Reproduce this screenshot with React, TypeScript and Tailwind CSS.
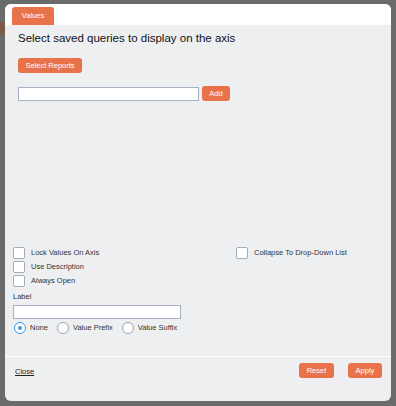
import { useState } from "react";

const orangeBtn =
  "flex items-center justify-center rounded-[3px] bg-[#e8734a] text-white text-[7.5px] leading-none";

const Checkbox = ({ label, checked, onChange }: { label: string; checked: boolean; onChange: () => void }) => {
  return (
    <label className="flex h-[14px] items-center gap-[6px] cursor-pointer">
      <span
        onClick={onChange}
        className="flex h-[12px] w-[12px] items-center justify-center rounded-[2px] border border-[#a4acb9] bg-white"
      >
        {checked && <span className="h-[6px] w-[6px] rounded-[1px] bg-[#3b97e3]" />}
      </span>
      <span className="text-[7.5px] text-[#333]">{label}</span>
    </label>
  );
};

const Radio = ({ label, checked, onChange }: { label: string; checked: boolean; onChange: () => void }) => {
  return (
    <label className="flex h-[12px] items-center gap-[4px] cursor-pointer" onClick={onChange}>
      <span
        className={
          "flex h-[12px] w-[12px] items-center justify-center rounded-full border bg-white " +
          (checked ? "border-[#3b97e3]" : "border-[#9aa3b0]")
        }
      >
        {checked && <span className="h-[4px] w-[4px] rounded-full bg-[#3b97e3]" />}
      </span>
      <span className="text-[7.5px] text-[#333]">{label}</span>
    </label>
  );
};

const App = () => {
  const [lock, setLock] = useState(false);
  const [useDesc, setUseDesc] = useState(false);
  const [alwaysOpen, setAlwaysOpen] = useState(false);
  const [collapse, setCollapse] = useState(false);
  const [affix, setAffix] = useState("none");
  const [query, setQuery] = useState("");
  const [label, setLabel] = useState("");

  return (
    <div className="relative h-[406px] w-[396px] overflow-hidden bg-[#6b6b6b] pl-[5px] pt-[4px] font-['Liberation_Sans',Arial,sans-serif]">
      {/* page content behind the overlay */}
      <div className="absolute left-0 top-[22px] h-[13px] w-[5px] bg-[#7e5a4b]"></div>

      <div className="relative flex h-[397px] w-[386px] flex-col overflow-hidden rounded-[6px] bg-[#eeeff1]">
        <div className="flex h-[21px] items-end bg-white pl-[7px]">
          <div className="flex h-[18px] w-[42px] items-center justify-center rounded-t-[3px] bg-[#e8734a] text-[7.5px] text-white">
            Values
          </div>
        </div>

        <div className="flex flex-1 flex-col">
          <div className="px-[13px] pt-[6px]">
            <h1 className="text-[11.5px] leading-[14px] text-[#111]">
              Select saved queries to display on the axis
            </h1>
            <button className={orangeBtn + " mt-[13px] h-[15px] w-[64px]"}>Select Reports</button>
            <div className="mt-[13px] flex items-center gap-[3px]">
              <input
                type="text"
                value={query}
                onChange={(e) => setQuery(e.target.value)}
                className="h-[14px] w-[181px] border border-[#a7b1c1] bg-white text-[8px] outline-none"
              />
              <button className={orangeBtn + " h-[15px] w-[28px]"}>Add</button>
            </div>
          </div>

          <div className="flex-1"></div>

          <div className="px-[8px] pb-[22px]">
            <div className="flex">
              <div className="flex w-[223px] flex-col">
                <Checkbox label="Lock Values On Axis" checked={lock} onChange={() => setLock(!lock)} />
                <Checkbox label="Use Description" checked={useDesc} onChange={() => setUseDesc(!useDesc)} />
                <Checkbox label="Always Open" checked={alwaysOpen} onChange={() => setAlwaysOpen(!alwaysOpen)} />
              </div>
              <div className="flex flex-col">
                <Checkbox
                  label="Collapse To Drop-Down List"
                  checked={collapse}
                  onChange={() => setCollapse(!collapse)}
                />
              </div>
            </div>
            <div className="mt-[4px] text-[7.5px] leading-[9px] text-[#333]">Label</div>
            <input
              type="text"
              value={label}
              onChange={(e) => setLabel(e.target.value)}
              className="mt-[4px] block h-[14px] w-[168px] border border-[#a7b1c1] bg-white text-[8px] outline-none"
            />
            <div className="mt-[3px] flex items-center gap-[9px] pl-[1px]">
              <Radio label="None" checked={affix === "none"} onChange={() => setAffix("none")} />
              <Radio label="Value Prefix" checked={affix === "prefix"} onChange={() => setAffix("prefix")} />
              <Radio label="Value Suffix" checked={affix === "suffix"} onChange={() => setAffix("suffix")} />
            </div>
          </div>
        </div>

        <div className="flex h-[45px] items-start justify-between border-t border-white pl-[10px] pr-[9px] pt-[6px]">
          <a href="#" className="mt-[4px] text-[7.5px] leading-[9px] text-[#222] underline">
            Close
          </a>
          <div className="flex gap-[14px]">
            <button className={orangeBtn + " h-[15px] w-[35px]"}>Reset</button>
            <button className={orangeBtn + " h-[15px] w-[34px]"}>Apply</button>
          </div>
        </div>
      </div>
    </div>
  );
};

export default App;
